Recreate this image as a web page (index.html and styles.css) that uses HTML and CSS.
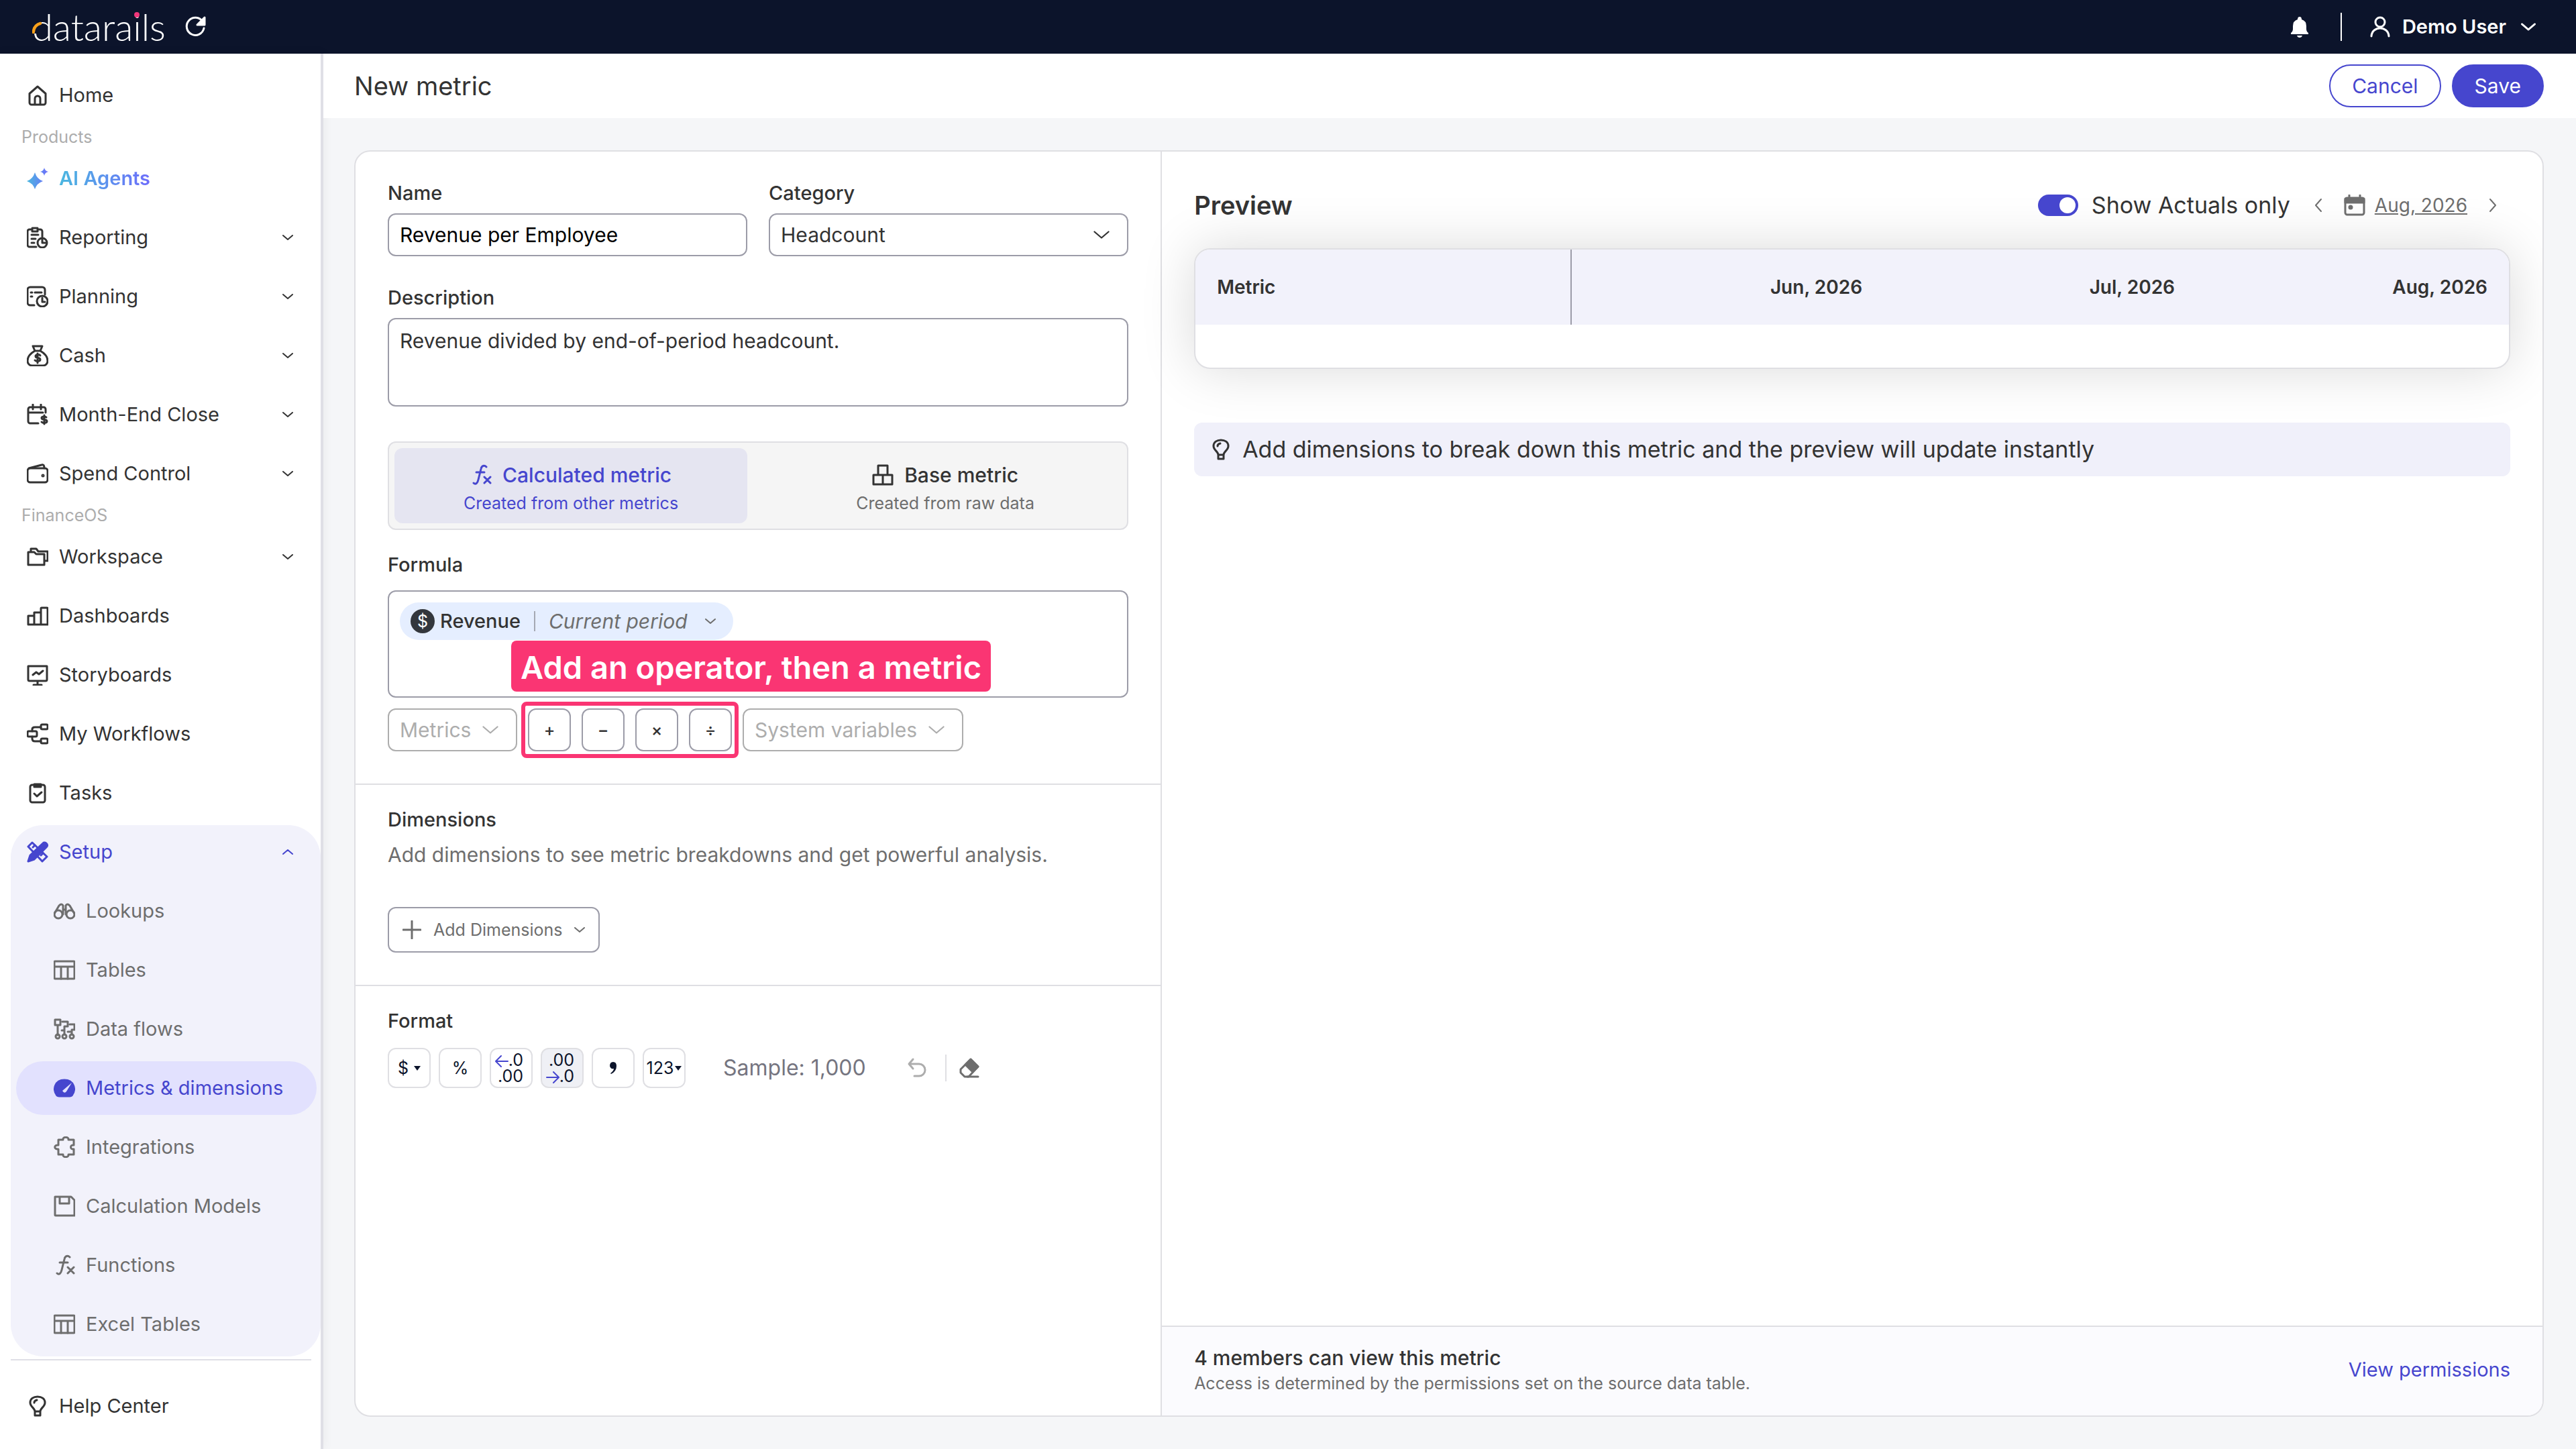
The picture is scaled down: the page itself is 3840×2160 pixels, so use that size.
FILE: index.html
```html
<!DOCTYPE html>
<html lang="en">
<head>
<meta charset="UTF-8">
<meta name="viewport" content="width=device-width, initial-scale=1.0">
<title>New metric</title>
<link rel="stylesheet" href="styles.css">
</head>
<body>

<!-- Icon set -->
<svg class="sprite" aria-hidden="true">
    <symbol id="chevron" viewBox="0 0 16 16"><path d="M1 5l7 6 7-6"/></symbol>
    <symbol id="home" viewBox="0 0 32 32"><path d="M4 13.500 16 3l12 10.500V27a3 3 0 0 1-3 3H7a3 3 0 0 1-3-3zM12 30v-9a4 4 0 0 1 8 0v9"/></symbol>
    <symbol id="reporting" viewBox="0 0 32 32"><path d="M14 30H4a3 3 0 0 1-3-3V7a3 3 0 0 1 3-3h2M18 4h2a3 3 0 0 1 3 3v8M8 2h8v5H8zM7 12h10M7 18h6M7 24h4"/><circle cx="23" cy="24" r="7"/><path d="M23 19v5h5"/></symbol>
    <symbol id="planning" viewBox="0 0 32 32"><path d="M11 29H5a4 4 0 0 1-4-4V6a4 4 0 0 1 4-4h18a4 4 0 0 1 4 4v7M12 10h10M6 10h2M6 16h2"/><circle cx="23" cy="23" r="8"/><path d="M23 18v6h4"/></symbol>
    <symbol id="cash" viewBox="0 0 32 32"><path d="M9 2h14l-3 7h-8zM12 9C5 13 1 19 1 24c0 4 3 7 7 7h16c4 0 7-3 7-7 0-5-4-11-11-15"/><path d="M20 16c-1-2-7-2-7 1 0 4 7 1 7 5 0 3-6 3-8 1M16 13v14"/></symbol>
    <symbol id="close" viewBox="0 0 32 32"><path d="M17 29H5a3 3 0 0 1-3-3V8a3 3 0 0 1 3-3h20a3 3 0 0 1 3 3v5M2 13h22M9 1v7M21 1v7"/><path d="M29 20c-2-2-7-1-7 1 0 4 8 1 8 5 0 3-6 3-8 1M26 17v13"/></symbol>
    <symbol id="wallet" viewBox="0 0 32 32"><rect x="1" y="8" width="30" height="21" rx="4"/><path d="M3 8 22 3c3-1 4 1 4 5"/><circle cx="24" cy="19" r="1"/></symbol>
    <symbol id="folder" viewBox="0 0 32 32"><path d="M2 9h9l3 3h12v16H2zM6 9V4h8l3 4h14v14h-5"/></symbol>
    <symbol id="bars" viewBox="0 0 32 32"><path d="M2 16h9v13H2zM11 11h10v18H11zM21 5a1 1 0 0 1 1-1h8a1 1 0 0 1 1 1v24H21z"/></symbol>
    <symbol id="board" viewBox="0 0 32 32"><path d="M2 3h28v20a2 2 0 0 1-2 2H4a2 2 0 0 1-2-2zM16 25v6M10 31h12M9 16l5-4 4 3 6-5"/></symbol>
    <symbol id="workflow" viewBox="0 0 32 32"><rect x="1" y="12" width="14" height="8" rx="2"/><rect x="21" y="2" width="10" height="7" rx="2"/><rect x="21" y="23" width="10" height="7" rx="2"/><path d="M8 12V9q0-3 4-3h9M8 20v3q0 4 4 4h9"/></symbol>
    <symbol id="tasks" viewBox="0 0 32 32"><rect x="5" y="4" width="22" height="26" rx="3"/><path class="solid" d="M11 3h10v4H11z"/><path d="M11 17l4 4 7-6"/></symbol>
    <symbol id="setup" viewBox="0 0 32 32"><path d="M2 8l6-6 22 21-7 7z"/><path d="M9 9l3-3M21 21l3-3"/><path class="solid" d="M24 3c3-3 9 2 5 6L11 27 2 30l3-9z"/></symbol>
    <symbol id="lookups" viewBox="0 0 32 32"><circle cx="7" cy="21" r="6"/><circle cx="25" cy="21" r="6"/><path d="M1 20 8 8q4-4 6 0v13M31 20 24 8q-4-4-6 0v13M14 14h4"/></symbol>
    <symbol id="table" viewBox="0 0 32 32"><rect x="1" y="3" width="30" height="26" rx="1"/><path d="M1 11h30M11 11v18M21 11v18"/></symbol>
    <symbol id="flows" viewBox="0 0 32 32"><path d="M2 2h8v8H2zM6 10v15M13 5h8v7h-5v12M16 18h-4M24 9h7v8h-4v7M27 20h-6"/><circle cx="6" cy="27" r="3"/><circle cx="16" cy="27" r="3"/><circle cx="27" cy="27" r="3"/></symbol>
    <symbol id="gauge" viewBox="0 0 32 32"><path class="solid" d="M5 27C-2 18 2 4 16 4s18 14 11 23q-1 1-3 1H8q-2 0-3-1z"/><path class="knock" d="M13 20q3 5 6 1l8-13z"/></symbol>
    <symbol id="puzzle" viewBox="0 0 32 32"><path d="M7 5h7c-1-5 9-5 8 0h8v8c-6-1-6 7 0 6v8h-8c1 5-9 5-8 0H7v-8c-7 1-7-7 0-6z"/></symbol>
    <symbol id="disk" viewBox="0 0 32 32"><path d="M2 2h24l5 5v23H3a1 1 0 0 1-1-1zM9 2v10h14V2"/></symbol>
    <symbol id="fx" viewBox="0 0 32 32"><path d="M5 28c3 3 6 0 7-5l4-16c1-5 5-6 8-3M9 12h12M21 19l9 9M30 19l-9 9"/></symbol>
    <symbol id="bulb" viewBox="0 0 32 32"><path d="M12 24c0-5-7-7-7-13C5 5 10 2 16 2s11 3 11 9c0 6-7 8-7 13zM12 30h8v-6M12 24v6M11 11q0-3 4-4"/></symbol>
    <symbol id="boxes" viewBox="0 0 32 32"><path d="M9 2h14v14H9zM2 16h28v14H2zM16 16v14"/></symbol>
</svg>

<header class="topbar">
    <div class="brand">
        <span class="logo">datara<span class="logo-i">i</span>ls<svg class="logo-arc" viewBox="0 0 16 18"><path d="M2 17Q3 5 14 2"/></svg></span>
        <button class="icon-btn" aria-label="Refresh"><svg class="icon" viewBox="0 0 32 32"><path d="M27 8A13 13 0 1 0 29 18"/><path class="solid" d="M30 2v11H19z"/></svg></button>
    </div>
    <div class="account">
        <button class="icon-btn" aria-label="Notifications"><svg class="icon" viewBox="0 0 32 32"><path class="fill" d="M3 27v-2q3-2 3-6v-4q0-8 7-10 0-4 3-4t3 4q7 2 7 10v4q0 4 3 6v2zM12 29h8q-1 3-4 3t-4-3z"/></svg></button>
        <span class="account-line"></span>
        <button class="user"><svg class="icon" viewBox="0 0 32 32"><circle cx="16" cy="9" r="7"/><path d="M3 30c1-16 25-16 26 0"/></svg>Demo User<svg class="user-arrow"><use href="#chevron"/></svg></button>
    </div>
</header>

<div class="shell">
    <nav class="sidebar">
        <a class="item" href="#"><svg class="icon"><use href="#home"/></svg>Home</a>
        <p class="group">Products</p>
        <a class="item ai" href="#"><svg class="icon" viewBox="0 0 32 32"><defs><linearGradient id="ai-fill"><stop offset="0" stop-color="#4bb8e0"/><stop offset="1" stop-color="#6d6dfb"/></linearGradient></defs><path fill="url(#ai-fill)" stroke="none" d="M12 7q3 10 12 13-9 3-12 12Q9 23 0 20 9 17 12 7zM26 0q1 5 6 6-5 1-6 6-1-5-6-6 5-1 6-6z"/></svg><span>AI Agents</span></a>
        <a class="item" href="#"><svg class="icon"><use href="#reporting"/></svg>Reporting<svg class="arrow"><use href="#chevron"/></svg></a>
        <a class="item" href="#"><svg class="icon"><use href="#planning"/></svg>Planning<svg class="arrow"><use href="#chevron"/></svg></a>
        <a class="item" href="#"><svg class="icon"><use href="#cash"/></svg>Cash<svg class="arrow"><use href="#chevron"/></svg></a>
        <a class="item" href="#"><svg class="icon"><use href="#close"/></svg>Month-End Close<svg class="arrow"><use href="#chevron"/></svg></a>
        <a class="item" href="#"><svg class="icon"><use href="#wallet"/></svg>Spend Control<svg class="arrow"><use href="#chevron"/></svg></a>
        <p class="group">FinanceOS</p>
        <a class="item" href="#"><svg class="icon"><use href="#folder"/></svg>Workspace<svg class="arrow"><use href="#chevron"/></svg></a>
        <a class="item" href="#"><svg class="icon"><use href="#bars"/></svg>Dashboards</a>
        <a class="item" href="#"><svg class="icon"><use href="#board"/></svg>Storyboards</a>
        <a class="item" href="#"><svg class="icon"><use href="#workflow"/></svg>My Workflows</a>
        <a class="item" href="#"><svg class="icon"><use href="#tasks"/></svg>Tasks</a>
        <div class="submenu">
            <a class="item open" href="#"><svg class="icon"><use href="#setup"/></svg>Setup<svg class="arrow up"><use href="#chevron"/></svg></a>
            <a class="item sub" href="#"><svg class="icon"><use href="#lookups"/></svg>Lookups</a>
            <a class="item sub" href="#"><svg class="icon"><use href="#table"/></svg>Tables</a>
            <a class="item sub" href="#"><svg class="icon"><use href="#flows"/></svg>Data flows</a>
            <a class="item sub active" href="#"><svg class="icon"><use href="#gauge"/></svg>Metrics &amp; dimensions</a>
            <a class="item sub" href="#"><svg class="icon"><use href="#puzzle"/></svg>Integrations</a>
            <a class="item sub" href="#"><svg class="icon"><use href="#disk"/></svg>Calculation Models</a>
            <a class="item sub" href="#"><svg class="icon"><use href="#fx"/></svg>Functions</a>
            <a class="item sub" href="#"><svg class="icon"><use href="#table"/></svg>Excel Tables</a>
        </div>
        <div class="help">
            <a class="item" href="#"><svg class="icon"><use href="#bulb"/></svg>Help Center</a>
        </div>
    </nav>

    <main class="main">
        <div class="page-head">
            <h1>New metric</h1>
            <div class="actions">
                <button class="btn">Cancel</button>
                <button class="btn primary">Save</button>
            </div>
        </div>

        <div class="card">
            <form class="editor">
                <section class="block details">
                    <div class="two-col">
                        <div>
                            <label class="label" for="name">Name</label>
                            <input class="field" id="name" type="text" value="Revenue per Employee">
                        </div>
                        <div>
                            <label class="label" for="category">Category</label>
                            <div class="select-wrap">
                                <select class="field" id="category"><option>Headcount</option></select>
                                <svg class="select-arrow"><use href="#chevron"/></svg>
                            </div>
                        </div>
                    </div>
                    <div class="description">
                        <label class="label" for="description">Description</label>
                        <textarea class="field" id="description">Revenue divided by end-of-period headcount.</textarea>
                    </div>
                    <div class="types">
                        <button class="type selected" type="button"><span class="type-name"><svg class="icon"><use href="#fx"/></svg>Calculated metric</span><span class="type-note">Created from other metrics</span></button>
                        <button class="type" type="button"><span class="type-name"><svg class="icon"><use href="#boxes"/></svg>Base metric</span><span class="type-note">Created from raw data</span></button>
                    </div>
                    <h2 class="label">Formula</h2>
                    <div class="formula">
                        <div class="chip">
                            <span class="coin">$</span>
                            <span class="chip-name">Revenue</span>
                            <div class="select-wrap">
                                <select class="period" aria-label="Period"><option>Current period</option></select>
                                <svg class="arrow"><use href="#chevron"/></svg>
                            </div>
                        </div>
                        <div class="callout">Add an operator, then a metric</div>
                    </div>
                    <div class="tools">
                        <div class="select-wrap">
                            <select class="field picker" aria-label="Metrics"><option>Metrics</option></select>
                            <svg class="select-arrow"><use href="#chevron"/></svg>
                        </div>
                        <div class="operators">
                            <button class="op" type="button">+</button>
                            <button class="op" type="button">−</button>
                            <button class="op" type="button">×</button>
                            <button class="op" type="button">÷</button>
                        </div>
                        <div class="select-wrap">
                            <select class="field picker" aria-label="System variables"><option>System variables</option></select>
                            <svg class="select-arrow"><use href="#chevron"/></svg>
                        </div>
                    </div>
                </section>

                <section class="block">
                    <h2 class="label">Dimensions</h2>
                    <p class="hint">Add dimensions to see metric breakdowns and get powerful analysis.</p>
                    <button class="add" type="button"><svg class="plus" viewBox="0 0 28 28"><path d="M14 1v26M1 14h26"/></svg>Add Dimensions<svg class="arrow"><use href="#chevron"/></svg></button>
                </section>

                <section class="block">
                    <h2 class="label">Format</h2>
                    <div class="formats">
                        <button class="format" type="button">$<i class="caret"></i></button>
                        <button class="format" type="button">%</button>
                        <button class="format stacked" type="button"><span><svg class="dec" viewBox="0 0 20 20"><path d="M19 10H2M9 2l-8 8 8 8"/></svg>.0</span><span>.00</span></button>
                        <button class="format stacked on" type="button"><span>.00</span><span><svg class="dec" viewBox="0 0 20 20"><path d="M1 10h17M11 2l8 8-8 8"/></svg>.0</span></button>
                        <button class="format comma" type="button" aria-label="Thousands"><svg viewBox="0 0 12 20"><path d="M6 1q5 0 5 6 0 8-8 12l-1-1q5-4 5-7-5 1-6-4 0-6 5-6z"/></svg></button>
                        <button class="format tight" type="button">123<i class="caret"></i></button>
                        <span class="sample">Sample: 1,000</span>
                        <button class="icon-btn undo" type="button" aria-label="Undo"><svg class="icon" viewBox="0 0 32 32"><path d="M10 3 4 10l6 7M5 10h14a8 8 0 0 1 0 18h-7"/></svg></button>
                        <button class="icon-btn erase" type="button" aria-label="Clear format"><svg class="icon" viewBox="0 0 32 32"><path d="M3 18 18 3l11 11-14 15H9l-6-6z"/><path class="solid" d="M18 3l11 11-8 8L10 11z"/><path d="M13 29h16"/></svg></button>
                    </div>
                </section>
            </form>

            <section class="preview">
                <div class="preview-body">
                    <div class="preview-head">
                        <h2>Preview</h2>
                        <label class="switch"><input type="checkbox" role="switch" checked>Show Actuals only</label>
                        <div class="month">
                            <button class="icon-btn" aria-label="Previous month"><svg class="step" viewBox="0 0 16 24"><path d="M12 3 4 12l8 9"/></svg></button>
                            <button class="date"><svg class="icon" viewBox="0 0 32 32"><rect x="2" y="5" width="28" height="25" rx="3"/><path class="solid" d="M2 6h28v6H2zM8 1v4M24 1v4"/><circle class="solid" cx="10" cy="19" r="2"/></svg><span>Aug, 2026</span></button>
                            <button class="icon-btn" aria-label="Next month"><svg class="step" viewBox="0 0 16 24"><path d="M4 3l8 9-8 9"/></svg></button>
                        </div>
                    </div>
                    <div class="grid">
                        <table>
                            <thead><tr><th>Metric</th><th>Jun, 2026</th><th>Jul, 2026</th><th>Aug, 2026</th></tr></thead>
                            <tbody><tr><td colspan="4"></td></tr></tbody>
                        </table>
                    </div>
                    <p class="tip"><svg class="icon"><use href="#bulb"/></svg>Add dimensions to break down this metric and the preview will update instantly</p>
                </div>
                <footer class="access">
                    <div>
                        <p class="members">4 members can view this metric</p>
                        <p class="access-note">Access is determined by the permissions set on the source data table.</p>
                    </div>
                    <a href="#">View permissions</a>
                </footer>
            </section>
        </div>
    </main>
</div>

</body>
</html>
```

FILE: styles.css
```css
* {
    box-sizing: border-box;
}

body {
    margin: 0;
    min-height: 100vh;
    display: flex;
    flex-direction: column;
    font-family: Inter, sans-serif;
    font-size: 30px;
    line-height: 36px;
    color: #333;
    background: #f5f6f8;
}

h1, h2, p {
    margin: 0;
}

a {
    color: inherit;
    text-decoration: none;
}

button, input, select, textarea {
    font: inherit;
    color: inherit;
}

button {
    padding: 0;
    border: 0;
    background: none;
    cursor: pointer;
}

svg {
    flex: none;
    fill: none;
    stroke: currentColor;
    stroke-width: 3;
    stroke-linecap: round;
    stroke-linejoin: round;
}

.sprite {
    position: absolute;
    width: 0;
    height: 0;
}

.solid {
    fill: currentColor;
}

.fill {
    fill: currentColor;
    stroke: none;
}

.knock {
    fill: #e2e1fe;
    stroke: none;
}

.icon {
    width: 32px;
    height: 32px;
}

.icon-btn {
    display: flex;
    align-items: center;
}

/* Top bar */
.topbar {
    height: 80px;
    padding: 0 60px 0 48px;
    display: flex;
    align-items: center;
    justify-content: space-between;
    color: #fff;
    background: #0c142b;
}

.brand, .account, .user {
    display: flex;
    align-items: center;
}

.brand {
    gap: 28px;
}

.logo {
    position: relative;
    font-family: Lato, sans-serif;
    font-size: 56px;
    font-weight: 300;
    line-height: 72px;
}

.logo-i {
    position: relative;
}

.logo-i::after {
    content: "";
    position: absolute;
    left: 2px;
    top: 12px;
    width: 8px;
    height: 8px;
    border-radius: 50%;
    background: #f0367a;
}

.logo-arc {
    position: absolute;
    left: 0;
    top: 28px;
    width: 14px;
    height: 18px;
    stroke: #f9a01b;
    stroke-width: 5;
    background: #0c142b;
}

.account-line {
    width: 2px;
    height: 42px;
    margin: 0 41px 0 45px;
    background: #fff;
}

.user {
    font-size: 29px;
    font-weight: 600;
}

.user .icon {
    margin-right: 17px;
}

.user-arrow {
    width: 22px;
    height: 22px;
    margin-left: 22px;
    stroke-width: 2;
}

/* Sidebar */
.shell {
    flex: 1;
    display: flex;
}

.sidebar {
    flex: none;
    width: 482px;
    padding-top: 22px;
    border-right: 4px solid #dfdfe6;
    font-size: 29px;
    background: #fff;
    box-shadow: 0 0 16px rgba(0, 0, 0, 0.06);
}

.item {
    display: flex;
    align-items: center;
    gap: 16px;
    height: 80px;
    padding: 0 41px 0 40px;
}

.item + .item {
    margin-top: 8px;
}

.arrow {
    width: 16px;
    height: 16px;
    stroke-width: 2;
}

.item .arrow {
    margin-left: auto;
}

.up {
    transform: rotate(180deg);
}

.group {
    padding-left: 32px;
    font-size: 25px;
    line-height: 44px;
    color: #adadad;
}

.ai {
    font-weight: 600;
}

.ai span {
    color: transparent;
    background: linear-gradient(90deg, #4bb8e0, #6d6dfb);
    background-clip: text;
}

.submenu {
    margin: 8px 0 0 16px;
    padding-bottom: 8px;
    border-radius: 48px;
    color: #6e6e6e;
    background: #f2f2fb;
}

.submenu .item {
    padding-left: 24px;
}

.submenu .open {
    color: #4646ce;
}

.submenu .sub {
    margin-right: 6px;
    margin-left: 8px;
    padding-right: 0;
    padding-left: 56px;
    border-radius: 40px;
}

.submenu .active {
    color: #4646ce;
    background: #e2e1fe;
}

.help {
    margin: 4px 14px 0 16px;
    padding-top: 28px;
    border-top: 2px solid #dfdfe6;
}

.help .item {
    padding-left: 24px;
}

/* Page */
.main {
    flex: 1;
    display: flex;
    flex-direction: column;
}

.page-head {
    height: 96px;
    padding: 0 48px 0 46px;
    display: flex;
    align-items: center;
    justify-content: space-between;
    background: #fff;
}

.page-head h1 {
    font-size: 38px;
    font-weight: 400;
}

.actions {
    display: flex;
    gap: 16px;
}

.btn {
    height: 64px;
    padding: 0 32px;
    border: 2px solid #4646ce;
    border-radius: 32px;
    color: #4646ce;
}

.primary {
    color: #fff;
    background: #4646ce;
}

.card {
    flex: 1;
    margin: 48px 48px 48px 46px;
    display: grid;
    grid-template-columns: 59fr 101fr;
    border: 2px solid #dfdfe3;
    border-radius: 24px;
    background: #fff;
    overflow: hidden;
}

/* Metric form */
.editor {
    border-right: 2px solid #dfdfe3;
}

.block {
    padding: 34px 48px 48px;
}

.block + .block {
    border-top: 2px solid #dfdfe3;
}

.details {
    padding-top: 44px;
}

.two-col {
    display: grid;
    grid-template-columns: 1fr 1fr;
    gap: 32px;
}

.label {
    display: block;
    margin-bottom: 12px;
    font-size: 29px;
    font-weight: 500;
}

.field {
    display: block;
    width: 100%;
    height: 64px;
    padding: 0 16px;
    border: 2px solid #9c9ca8;
    border-radius: 12px;
    background: #fff;
    appearance: none;
}

#name {
    color: #000;
}

textarea.field {
    height: 132px;
    padding-top: 14px;
    resize: none;
}

.select-wrap {
    position: relative;
}

.select-arrow {
    position: absolute;
    right: 28px;
    top: 20px;
    width: 24px;
    height: 24px;
    stroke-width: 1.5;
    pointer-events: none;
}

.description {
    margin-top: 44px;
}

.types {
    margin: 52px 0 34px;
    padding: 8px;
    display: grid;
    grid-template-columns: 1fr 1fr;
    gap: 32px;
    border: 2px solid #dfdfe3;
    border-radius: 12px;
    background: #f5f5f5;
}

.type {
    height: 112px;
    padding-top: 8px;
    border-radius: 12px;
}

.type-name {
    display: flex;
    align-items: center;
    justify-content: center;
    gap: 16px;
    line-height: 44px;
    font-weight: 500;
}

.type-note {
    font-size: 25px;
    line-height: 40px;
    color: #6e6e6e;
}

.selected, .selected .type-note {
    color: #4646ce;
}

.selected {
    background: #e5e5f1;
}

.formula {
    position: relative;
    height: 160px;
    margin-top: 20px;
    padding: 16px;
    border: 2px solid #9c9ca8;
    border-radius: 12px;
}

.chip {
    display: inline-flex;
    align-items: center;
    height: 56px;
    padding: 0 26px 0 16px;
    border-radius: 28px;
    background: #e5eeff;
}

.coin {
    width: 36px;
    margin-right: 8px;
    border-radius: 50%;
    font-size: 25px;
    text-align: center;
    color: #fff;
    background: #33373d;
}

.chip-name {
    padding-right: 20px;
    font-size: 29px;
    line-height: 30px;
    font-weight: 500;
    border-right: 2px solid #a5a9b3;
}

.period {
    display: block;
    padding: 0 42px 0 20px;
    border: 0;
    font-style: italic;
    color: #6e6e6e;
    background: none;
    appearance: none;
}

.chip .arrow {
    position: absolute;
    right: 0;
    top: 10px;
    color: #6e6e6e;
    pointer-events: none;
}

.callout {
    position: absolute;
    left: 182px;
    top: 73px;
    padding: 4px 14px 0;
    border-radius: 8px;
    font-size: 47px;
    line-height: 72px;
    font-weight: 600;
    white-space: nowrap;
    color: #fff;
    background: #fa3573;
}

.tools {
    display: flex;
    gap: 16px;
    margin-top: 16px;
}

.picker {
    padding-right: 66px;
    border-color: #adadad;
    color: #adadad;
}

.tools .select-arrow {
    color: #adadad;
}

.operators {
    position: relative;
    display: flex;
    gap: 16px;
}

/* Highlight ring around the operator buttons */
.operators::after {
    content: "";
    position: absolute;
    inset: -10px;
    border: 6px solid #fa3573;
    border-radius: 8px;
    pointer-events: none;
}

.op {
    width: 64px;
    height: 64px;
    border: 2px solid #9c9ca8;
    border-radius: 12px;
    font-size: 25px;
    font-weight: 500;
}

.hint {
    margin: 14px 0 58px;
    line-height: 40px;
    color: #6e6e6e;
}

.add {
    display: flex;
    align-items: center;
    height: 68px;
    padding: 0 20px;
    border: 2px solid #9c9ca8;
    border-radius: 12px;
    font-size: 25px;
    color: #6e6e6e;
}

.plus {
    width: 28px;
    height: 28px;
    margin-right: 18px;
}

.add .arrow {
    margin-left: 18px;
}

.formats {
    display: flex;
    align-items: center;
    gap: 12px;
    margin-top: 22px;
}

.format {
    width: 64px;
    height: 60px;
    display: flex;
    align-items: center;
    justify-content: center;
    gap: 8px;
    border: 2px solid #dfdfe3;
    border-radius: 12px;
    font-size: 25px;
    color: #0c142b;
}

.tight {
    gap: 2px;
}

.stacked {
    flex-direction: column;
    align-items: flex-end;
    gap: 0;
    padding-right: 12px;
    line-height: 24px;
}

.on {
    background: #eff0f5;
}

.dec {
    width: 20px;
    height: 20px;
    stroke: #4646ce;
    stroke-width: 2;
    vertical-align: bottom;
}

.comma svg {
    width: 12px;
    height: 20px;
    fill: currentColor;
    stroke: none;
}

.caret {
    border: 5px solid transparent;
    border-top: 7px solid;
    border-bottom: 0;
}

.sample {
    margin-left: 44px;
    font-size: 32px;
    color: #757580;
}

.undo {
    margin-left: 48px;
    color: #adadad;
}

.erase {
    height: 40px;
    margin-left: 14px;
    padding-left: 18px;
    border-left: 2px solid #dfdfe3;
    color: #6e6e6e;
}

/* Preview */
.preview {
    display: flex;
    flex-direction: column;
}

.preview-body {
    flex: 1;
    padding: 60px 48px 0;
}

.preview-head {
    display: flex;
    align-items: center;
    height: 40px;
    margin-bottom: 44px;
}

.preview-head h2 {
    margin-right: auto;
    font-size: 38px;
    font-weight: 600;
}

.switch {
    display: flex;
    align-items: center;
    gap: 20px;
    font-size: 34px;
}

.switch input {
    width: 60px;
    height: 32px;
    margin: 0;
    padding: 4px;
    display: flex;
    justify-content: flex-end;
    border-radius: 16px;
    background: #4646ce;
    appearance: none;
}

.switch input::before {
    content: "";
    width: 24px;
    height: 24px;
    border-radius: 50%;
    background: #fff;
}

.month, .date {
    display: flex;
    align-items: center;
    color: #6e6e6e;
}

.month {
    gap: 30px;
    margin: 0 18px 0 34px;
}

.date {
    gap: 14px;
    font-size: 28px;
}

.date span {
    text-decoration: underline;
}

.step {
    width: 16px;
    height: 24px;
    stroke-width: 2;
}

.grid {
    border: 2px solid #dfdfe3;
    border-radius: 24px;
    background: #fff;
    box-shadow: 0 0 80px rgba(0, 0, 0, 0.15);
    overflow: hidden;
}

table {
    width: 100%;
    border-collapse: collapse;
    table-layout: fixed;
    font-size: 28px;
}

th {
    height: 112px;
    padding: 0 32px;
    font-weight: 600;
    text-align: right;
    background: #f2f2fb;
}

th:first-child {
    width: 560px;
    text-align: left;
    border-right: 2px solid #9c9ca8;
}

td {
    height: 64px;
    padding: 0;
}

.tip {
    display: flex;
    align-items: center;
    gap: 16px;
    height: 80px;
    margin-top: 80px;
    padding: 0 24px;
    border-radius: 12px;
    font-size: 34px;
    background: #f0f0fa;
}

.access {
    display: flex;
    align-items: center;
    justify-content: space-between;
    padding: 26px 48px 30px;
    border-top: 2px solid #dfdfe3;
    background: #fbfbfe;
}

.members {
    line-height: 40px;
    font-weight: 500;
}

.access-note {
    font-size: 25px;
    color: #6e6e6e;
}

.access a {
    font-size: 29px;
    color: #4646ce;
}
```
